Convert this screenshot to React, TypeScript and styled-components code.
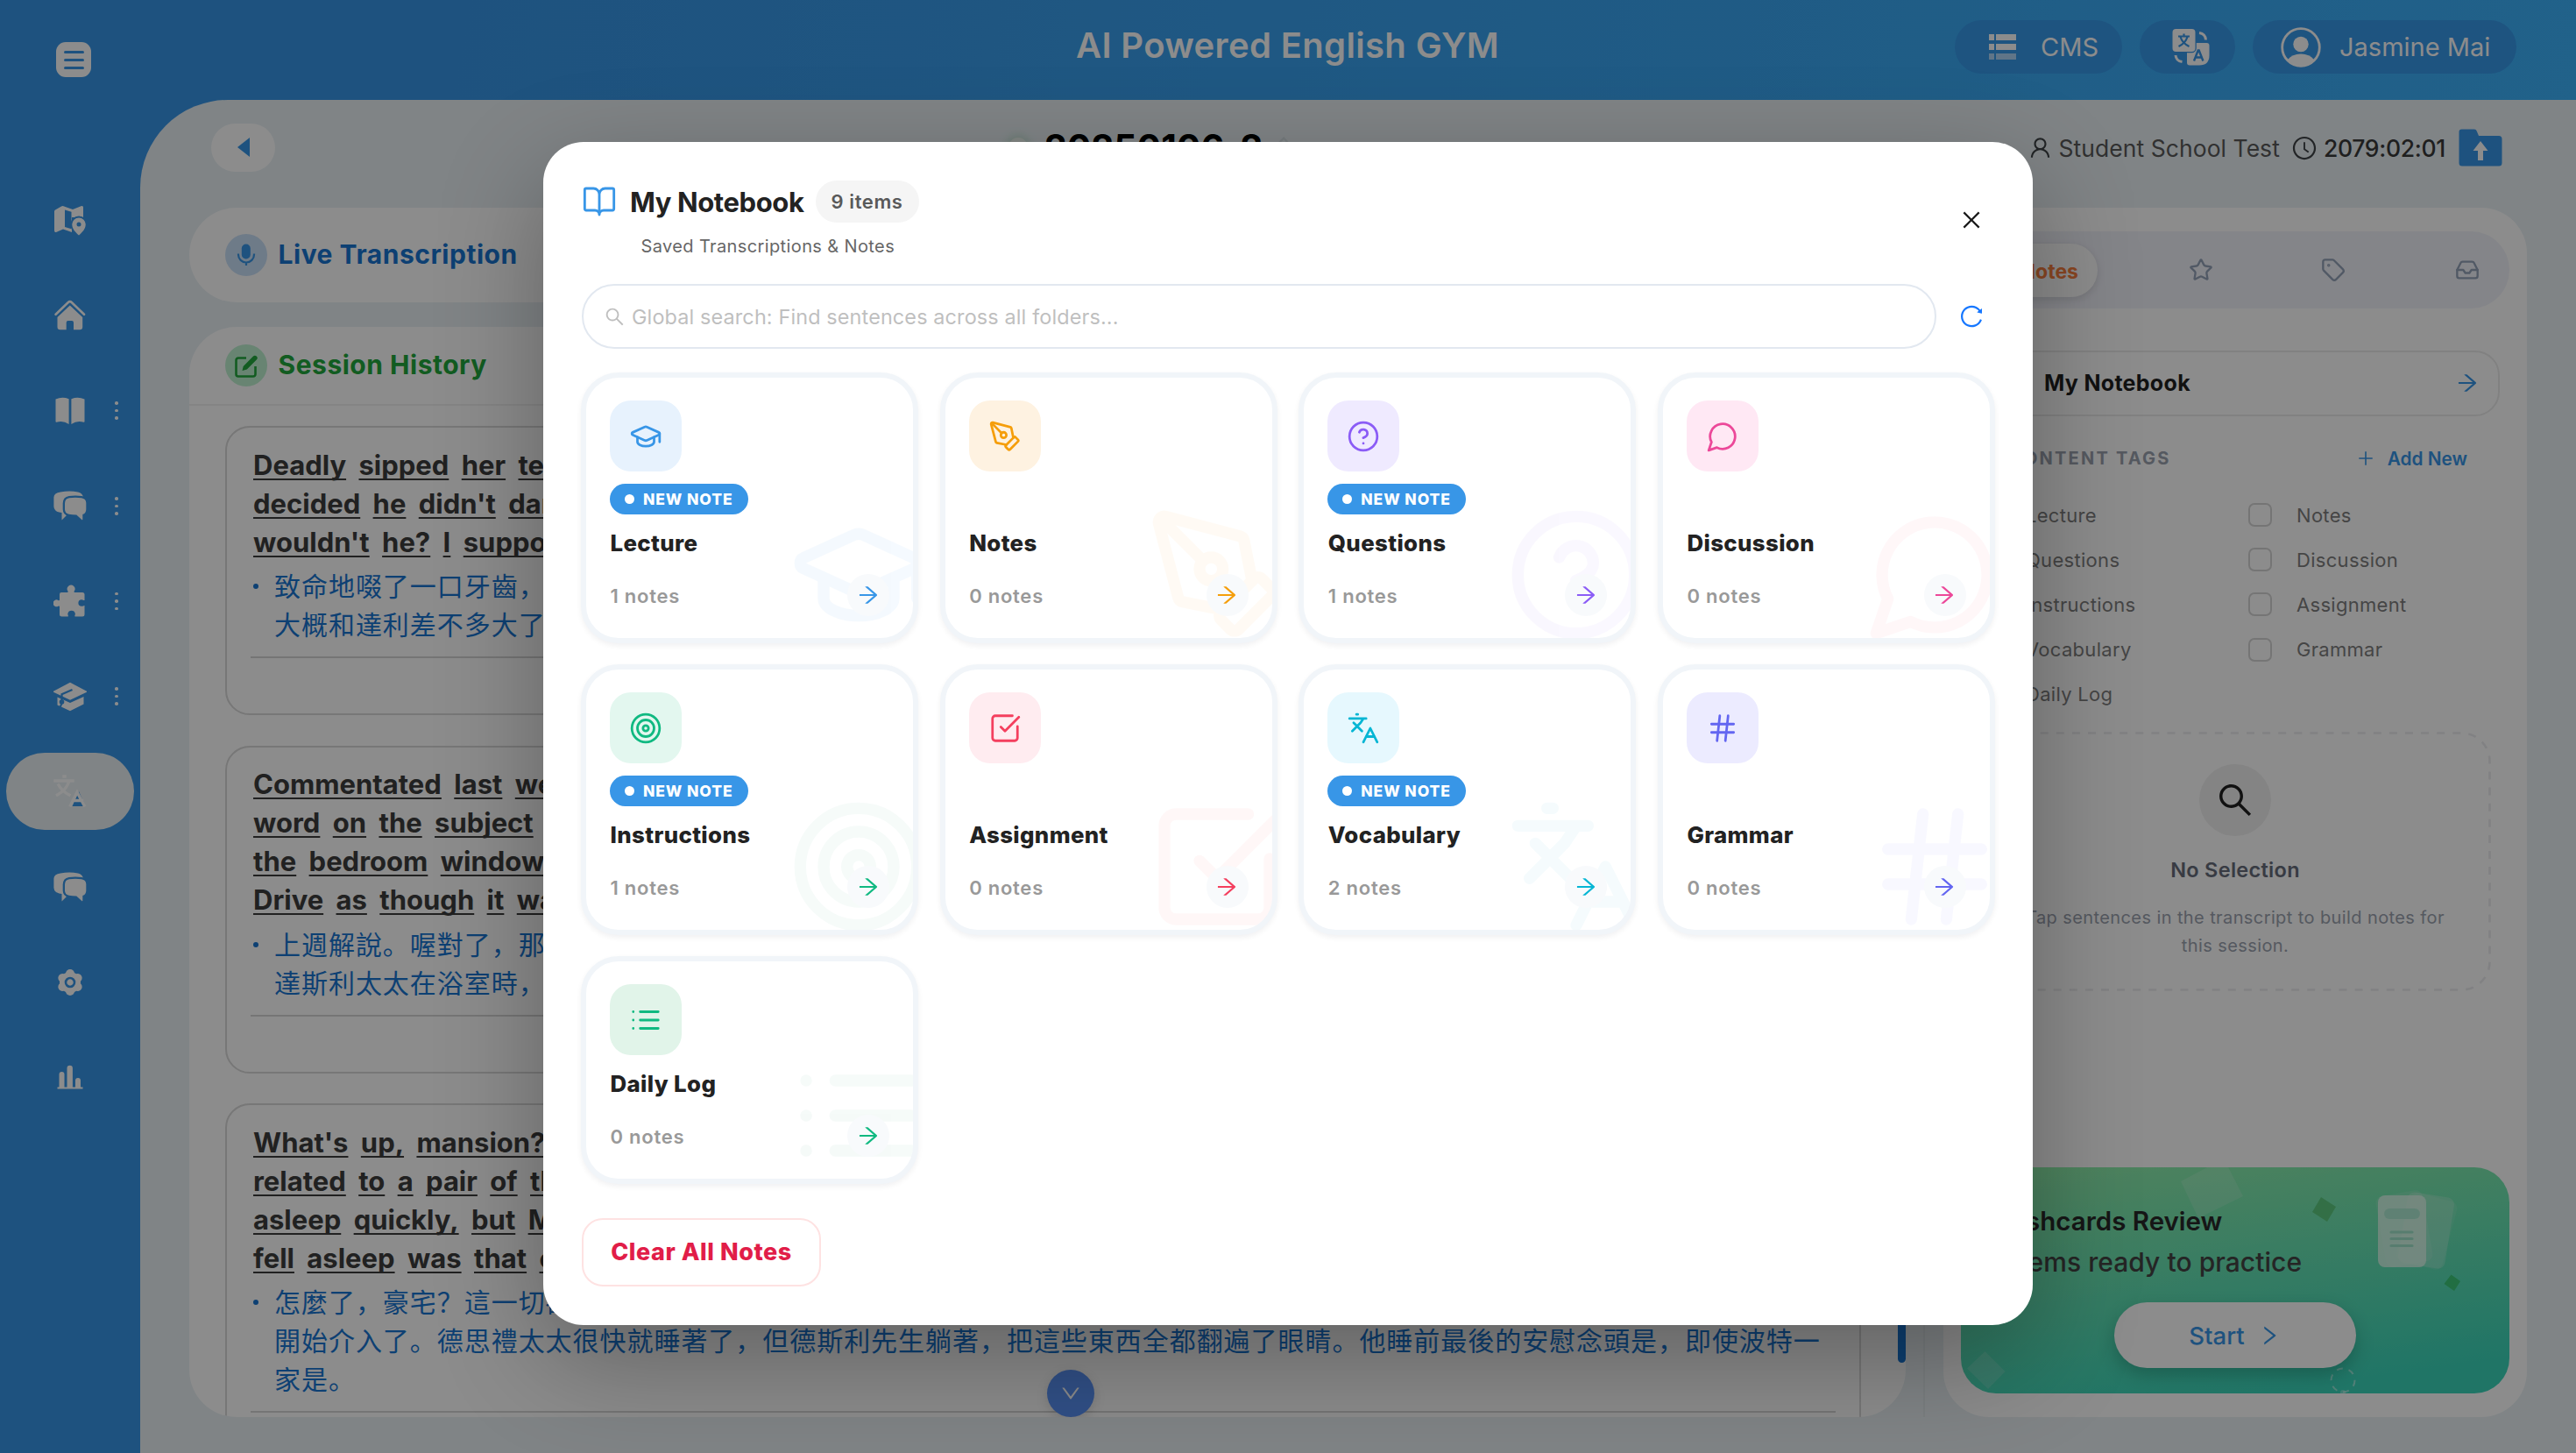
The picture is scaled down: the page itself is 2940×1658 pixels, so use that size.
import React from 'react';
import styled, { createGlobalStyle } from 'styled-components';
import { Inbox, Star, Tag as TagIcon } from 'lucide-react';
import {
  AiOutlineArrowRight,
  AiOutlineClockCircle,
  AiOutlineClose,
  AiOutlineDown,
  AiOutlineEdit,
  AiOutlinePlus,
  AiOutlineReload,
  AiOutlineRight,
  AiOutlineSearch,
  AiOutlineUser,
} from 'react-icons/ai';

const BLUE = '#3896e7';
const PAGE = '#e9f1f5';
const LINK = '#1976d2';
const SANS = '"Inter", "Noto Sans CJK SC", "Liberation Sans", sans-serif';

const GlobalStyle = createGlobalStyle`
  * { box-sizing: border-box; }
  html, body { margin: 0; padding: 0; }
  body { width: 2940px; height: 1658px; overflow: hidden; font-family: ${SANS}; }
  button { font-family: inherit; border: 0; background: none; padding: 0; }
  svg { display: block; flex: none; }
`;

/* ---------- shell ---------- */

const Shell = styled.div`
  position: relative;
  width: 2940px;
  height: 1658px;
  overflow: hidden;
  display: flex;
  flex-direction: column;
  background: ${BLUE};
`;

const Header = styled.header`
  height: 114px;
  flex: none;
  display: grid;
  grid-template-columns: 1fr auto 1fr;
  align-items: start;
  padding: 0 68px 0 64px;
  background: linear-gradient(100deg, ${BLUE} 0%, ${BLUE} 18%, #3cb2fb 100%);
`;

const MenuButton = styled.button`
  width: 40px;
  height: 40px;
  margin-top: 48px;
  border-radius: 11px;
  background: #fff;
  display: flex;
  flex-direction: column;
  align-items: center;
  justify-content: center;
  gap: 6px;
`;

const MenuLine = styled.span`
  width: 23px;
  height: 3px;
  border-radius: 2px;
  background: ${BLUE};
`;

const AppTitle = styled.h1`
  margin: 28px 0 0;
  padding-left: 3px;
  font-size: 40px;
  line-height: 48px;
  font-weight: 600;
  letter-spacing: 0.35px;
  color: #fff;
  white-space: nowrap;
`;

const HeaderActions = styled.div`
  display: flex;
  justify-content: flex-end;
  gap: 20px;
  margin-top: 23px;
`;

const Chip = styled.button<{ $w: number; $gap?: number; $start: number }>`
  width: ${(p) => p.$w}px;
  height: 61px;
  border-radius: 31px;
  background: #3899ea;
  display: flex;
  align-items: center;
  padding-left: ${(p) => p.$start}px;
  gap: ${(p) => p.$gap ?? 0}px;
  color: #fff;
  font-size: 29px;
  letter-spacing: 0;
  white-space: nowrap;
`;

const Body = styled.div`
  flex: 1;
  min-height: 0;
  display: flex;
`;

const Sidebar = styled.nav`
  width: 160px;
  flex: none;
  padding-top: 83px;
  display: flex;
  flex-direction: column;
`;

const NavRow = styled.div`
  height: 108.67px;
  display: grid;
  grid-template-columns: 1fr 40px 1fr;
  align-items: center;
  justify-items: center;
  color: #fff;
`;

const NavIcon = styled.span`
  grid-column: 2;
  display: flex;
  justify-content: center;
`;

const NavDots = styled.span`
  grid-column: 3;
  display: flex;
  flex-direction: column;
  gap: 5px;
  margin-left: 6px;
`;

const NavDot = styled.i`
  width: 3.5px;
  height: 3.5px;
  border-radius: 50%;
  background: #fff;
`;

const ActivePill = styled.div`
  width: 146px;
  height: 88px;
  margin: 10.33px auto;
  border-radius: 44px;
  background: ${PAGE};
  display: flex;
  align-items: center;
  justify-content: center;
`;

const Content = styled.main`
  flex: 1;
  min-width: 0;
  border-top-left-radius: 100px;
  background: ${PAGE};
  display: flex;
  flex-direction: column;
  padding: 0 56px 41px;
`;

/* ---------- title row ---------- */

const TitleRow = styled.div`
  height: 122.5px;
  flex: none;
  display: grid;
  grid-template-columns: 910px 1fr auto;
  align-items: center;
  padding: 27px 28px 41px 25px;
`;

const BackButton = styled.button`
  width: 73px;
  height: 54.5px;
  border-radius: 28px;
  background: #fff;
  display: flex;
  align-items: center;
  justify-content: center;
`;

const SessionTitle = styled.div`
  display: flex;
  align-items: center;
  color: #000;
  font-size: 41px;
  line-height: 50px;
  font-weight: 700;
`;

const LiveDot = styled.span`
  width: 22px;
  height: 22px;
  margin-right: 19px;
  border-radius: 50%;
  background: #eef6f0;
  box-shadow: 0 0 10px 3px rgba(120, 200, 140, 0.28);
`;

const EditMark = styled.span`
  margin-left: 4px;
  color: #d8e0e4;
`;

const SessionInfo = styled.div`
  display: flex;
  align-items: center;
  padding-top: 1px;
  color: #595959;
  white-space: nowrap;
`;

const InfoText = styled.span<{ $strong?: boolean }>`
  margin: 0 ${(p) => (p.$strong ? 15 : 13)}px 0 7px;
  font-size: ${(p) => (p.$strong ? 26.5 : 26.5)}px;
  font-weight: ${(p) => (p.$strong ? 500 : 400)};
  letter-spacing: ${(p) => (p.$strong ? -0.3 : 0.05)}px;
  color: ${(p) => (p.$strong ? '#3a3a3a' : '#595959')};
`;

const InfoIcon = styled.span`
  color: #3f4346;
`;

/* ---------- columns ---------- */

const Columns = styled.div`
  flex: 1;
  min-height: 0;
  display: flex;
`;

const LeftColumn = styled.section`
  width: 1959px;
  flex: none;
  display: flex;
  flex-direction: column;
  gap: 28px;
`;

const ColumnRule = styled.div`
  width: 2px;
  margin: 0 21px 0 20px;
  background: rgba(0, 0, 0, 0.035);
`;

const LiveCard = styled.div`
  height: 108.5px;
  flex: none;
  border-radius: 54px;
  background: #fff;
  display: flex;
  align-items: center;
  gap: 12.5px;
  padding-left: 41px;
`;

const HistoryCard = styled.div`
  position: relative;
  flex: 1;
  min-height: 0;
  overflow: hidden;
  border-radius: 54px;
  background: #fff;
  display: flex;
  flex-direction: column;
`;

const HistoryHead = styled.div`
  height: 90px;
  flex: none;
  border-bottom: 2px solid #f0f0f0;
  display: flex;
  align-items: center;
  gap: 12.5px;
  padding-left: 41px;
`;

const RoundIcon = styled.span<{ $bg: string; $fg: string }>`
  width: 48px;
  height: 48px;
  border-radius: 50%;
  background: ${(p) => p.$bg};
  color: ${(p) => p.$fg};
  display: flex;
  align-items: center;
  justify-content: center;
`;

const SectionTitle = styled.h2<{ $c: string }>`
  margin: 0;
  padding-bottom: 2px;
  font-size: 30px;
  font-weight: 700;
  letter-spacing: 0.52px;
  color: ${(p) => p.$c};
`;

const HistoryList = styled.div`
  display: flex;
  flex-direction: column;
  gap: 34.7px;
  padding: 23px 51px 0 41px;
`;

const Entry = styled.article`
  border: 2px solid #d9d9d9;
  border-radius: 28px;
  padding: 20px 27px 63px;
  flex: none;
`;

const WordLine = styled.div`
  height: 44px;
  display: flex;
  align-items: center;
  gap: 14.4px;
  padding-left: 3px;
  font-size: 31px;
  font-weight: 700;
  color: #3d3d3d;
  white-space: nowrap;
`;

const Word = styled.span`
  text-decoration: underline;
  text-decoration-thickness: 2px;
  text-underline-offset: 4px;
  text-decoration-skip-ink: none;
`;

const Translation = styled.div`
  margin-top: 6px;
  padding-bottom: 15px;
  border-bottom: 2px solid #d6d6d6;
  display: grid;
  grid-template-columns: 27px 1fr;
  color: ${LINK};
`;

const Bullet = styled.i`
  width: 6px;
  height: 6px;
  margin: 20px 0 0 3px;
  border-radius: 50%;
  background: ${LINK};
`;

const ZhLine = styled.div`
  height: 44px;
  line-height: 43px;
  font-family: "Noto Sans CJK SC", sans-serif;
  font-size: 30px;
  letter-spacing: 0.96px;
  white-space: nowrap;
`;

const ScrollThumb = styled.div`
  position: absolute;
  right: 0;
  top: 560px;
  width: 9px;
  height: 622px;
  border-radius: 5px;
  background: ${LINK};
`;

const DownButton = styled.button`
  position: absolute;
  left: 979px;
  bottom: 0;
  width: 54px;
  height: 54px;
  border-radius: 50%;
  background: #5a92f6;
  color: #fff;
  display: flex;
  align-items: center;
  justify-content: center;
  box-shadow: 0 4px 14px rgba(0, 0, 0, 0.14);
`;

/* ---------- right panel ---------- */

const Panel = styled.aside`
  width: 666px;
  flex: none;
  border-radius: 52px;
  background: #fff;
  display: flex;
  flex-direction: column;
  padding: 27.5px 20px 27px;
`;

const Tabs = styled.div`
  height: 88px;
  flex: none;
  border-radius: 44px;
  background: #f1f2fa;
  display: grid;
  grid-template-columns: 142px 1fr 1fr 1fr;
  align-items: center;
  padding: 0 0 0 14px;
  color: #94a3b8;
`;

const ActiveTab = styled.div`
  height: 61px;
  border-radius: 31px;
  background: #fff;
  box-shadow: 0 3px 10px rgba(0, 0, 0, 0.12);
  display: flex;
  align-items: center;
  justify-content: flex-end;
  padding: 3px 22px 0 0;
  color: #f9803e;
  font-size: 23px;
  font-weight: 700;
`;

const TabIcon = styled.span<{ $x: number }>`
  padding-left: ${(p) => p.$x}px;
`;

const NotebookRow = styled.div`
  height: 75px;
  flex: none;
  margin: 48px 11px 0;
  border: 2px solid #ececec;
  border-radius: 28px;
  display: flex;
  align-items: center;
  justify-content: space-between;
  padding: 0 21px 1px 82px;
  font-size: 25px;
  font-weight: 700;
  letter-spacing: 0.3px;
  color: #1f1f1f;
`;

const TagsHead = styled.div`
  display: flex;
  justify-content: space-between;
  align-items: center;
  height: 40px;
  margin-top: 28px;
  padding: 0 48px 0 55px;
  font-size: 20px;
  font-weight: 700;
  color: #9ca3af;
  letter-spacing: 2.2px;
`;

const AddNew = styled.span`
  display: flex;
  align-items: center;
  gap: 14px;
  color: ${BLUE};
  font-size: 20.8px;
  font-weight: 600;
  letter-spacing: 0;
`;

const TagGrid = styled.div`
  display: grid;
  grid-template-columns: 309px 1fr;
  grid-auto-rows: 51.2px;
  align-items: center;
  margin-top: 19px;
  padding-left: 19px;
`;

const TagOption = styled.label`
  display: flex;
  align-items: center;
  gap: 28px;
  font-size: 22px;
  letter-spacing: 0.3px;
  color: #7f7f7f;
`;

const CheckBox = styled.span`
  width: 27px;
  height: 27px;
  border: 2px solid #d6d6d6;
  border-radius: 7px;
`;

const EmptyBox = styled.div`
  position: relative;
  width: 584px;
  height: 296px;
  flex: none;
  margin: 17px auto 0;
  display: flex;
  flex-direction: column;
  align-items: center;
`;

const DashFrame = styled.svg`
  position: absolute;
  inset: 0;
`;

const EmptyIcon = styled.span`
  width: 82px;
  height: 82px;
  margin-top: 37px;
  border-radius: 50%;
  background: #f1f1f1;
  color: #1f1f1f;
  display: flex;
  align-items: center;
  justify-content: center;
`;

const EmptyTitle = styled.div`
  margin-top: 22.5px;
  line-height: 34px;
  font-size: 23.5px;
  font-weight: 600;
  letter-spacing: 0.3px;
  color: #666c7a;
`;

const EmptyText = styled.p`
  margin: 21px 0 0;
  line-height: 32px;
  font-size: 20px;
  letter-spacing: 0.4px;
  text-align: center;
  color: #9ca3af;
  white-space: pre-line;
`;

const Flash = styled.div`
  position: relative;
  height: 258px;
  flex: none;
  margin-top: auto;
  border-radius: 40px;
  overflow: hidden;
  background: linear-gradient(172deg, #8eeeac 5%, #3bd6bb 88%);
  display: flex;
  flex-direction: column;
`;

const FlashArt = styled.svg`
  position: absolute;
  inset: 0;
`;

const FlashTitle = styled.div`
  position: relative;
  margin: 40px 0 0 32px;
  line-height: 42px;
  font-size: 29.5px;
  font-weight: 600;
  color: #282828;
`;

const FlashText = styled.div`
  position: relative;
  margin: 5px 0 0 32px;
  line-height: 42px;
  font-size: 30px;
  font-weight: 500;
  letter-spacing: 0.05px;
  color: #444;
`;

const StartButton = styled.button`
  position: relative;
  width: 276px;
  height: 75px;
  margin: 25px auto 0;
  border-radius: 38px;
  background: #fff;
  color: ${BLUE};
  box-shadow: 0 8px 20px rgba(0, 60, 50, 0.28);
  display: flex;
  align-items: center;
  justify-content: center;
  gap: 14px;
  font-size: 27.5px;
  font-weight: 500;
`;

/* ---------- modal ---------- */

const Overlay = styled.div`
  position: absolute;
  inset: 0;
  background: rgba(0, 0, 0, 0.45);
  display: flex;
  justify-content: center;
  align-items: flex-start;
  padding-top: 162px;
`;

const Dialog = styled.div`
  width: 1700px;
  height: 1350px;
  border-radius: 46px;
  background: #fff;
  box-shadow: 0 40px 120px rgba(0, 0, 0, 0.3);
  padding: 44px;
  display: flex;
  flex-direction: column;
`;

const DialogHead = styled.div`
  display: flex;
  align-items: center;
  justify-content: space-between;
  height: 90px;
`;

const DialogTitleRow = styled.div`
  display: flex;
  align-items: center;
  height: 48px;
  color: ${BLUE};
`;

const DialogTitle = styled.h3`
  margin: 0 13px 0 15px;
  font-size: 31px;
  font-weight: 700;
  letter-spacing: -0.4px;
  color: #222;
`;

const CountPill = styled.span`
  height: 48px;
  padding: 0 18px;
  border-radius: 24px;
  background: #f5f5f5;
  color: #595959;
  display: flex;
  align-items: center;
  font-size: 22px;
  font-weight: 600;
  letter-spacing: 0.6px;
`;

const DialogSub = styled.div`
  margin: 12px 0 0 67.5px;
  line-height: 30px;
  font-size: 20px;
  letter-spacing: 0.38px;
  color: #666;
`;

const SquareButton = styled.button<{ $c: string }>`
  width: 52px;
  height: 52px;
  display: flex;
  align-items: center;
  justify-content: center;
  color: ${(p) => p.$c};
`;

const SearchRow = styled.div`
  margin-top: 28px;
  display: flex;
  align-items: center;
  gap: 14px;
`;

const SearchField = styled.div`
  flex: 1;
  height: 74px;
  border: 2px solid #e2e8f0;
  border-radius: 37px;
  padding-left: 23px;
  display: flex;
  align-items: center;
  gap: 7px;
  font-size: 23.4px;
  letter-spacing: 0.14px;
  color: #bfbfbf;
`;

const FolderGrid = styled.div`
  margin: 27px -1px 0;
  display: grid;
  grid-template-columns: repeat(4, 385px);
  gap: 24.67px;
`;

const Folder = styled.article`
  position: relative;
  overflow: hidden;
  border: 6px solid #f1f5f9;
  border-radius: 43px;
  background: #fff;
  box-shadow: 0 3px 6px rgba(15, 23, 42, 0.06);
  padding: 26px 27px 25px;
  display: flex;
  flex-direction: column;
  align-items: flex-start;
`;

const Watermark = styled.span<{ $c: string }>`
  position: absolute;
  right: -17.5px;
  bottom: -8px;
  opacity: 0.045;
  color: ${(p) => p.$c};
`;

const Tile = styled.span<{ $bg: string; $fg: string }>`
  width: 82px;
  height: 81px;
  flex: none;
  border-radius: 24px;
  background: ${(p) => p.$bg};
  color: ${(p) => p.$fg};
  display: flex;
  align-items: center;
  justify-content: center;
`;

const NewBadge = styled.span`
  height: 35px;
  margin-top: 14px;
  padding: 0 17px;
  border-radius: 18px;
  background: ${BLUE};
  color: #fff;
  display: flex;
  align-items: center;
  gap: 10px;
  font-size: 17.5px;
  font-weight: 800;
  letter-spacing: 0.9px;
`;

const BadgeDot = styled.i`
  width: 11px;
  height: 11px;
  border-radius: 50%;
  background: #fff;
`;

const FolderName = styled.div`
  margin-top: auto;
  padding: 14.5px 0 0 0.5px;
  line-height: 36px;
  font-size: 25.8px;
  font-weight: 800;
  letter-spacing: 0.38px;
  color: #222;
`;

const FolderFoot = styled.div`
  position: relative;
  width: 100%;
  margin-top: 17px;
  display: flex;
  align-items: center;
  justify-content: space-between;
  font-size: 22px;
  font-weight: 600;
  letter-spacing: 0.75px;
  color: #999;
`;

const FolderCount = styled.span`
  padding: 3px 0 0 0.5px;
`;

const GoCircle = styled.span<{ $c: string }>`
  width: 48px;
  height: 48px;
  border-radius: 50%;
  background: #f8fafc;
  color: ${(p) => p.$c};
  display: flex;
  align-items: center;
  justify-content: center;
  padding: 0 1px 0 0;
`;

const ClearButton = styled.button`
  align-self: flex-start;
  width: 273px;
  height: 78px;
  margin-top: 39px;
  border: 2px solid #fee2e2;
  border-radius: 24px;
  color: #e11d48;
  font-size: 27px;
  font-weight: 800;
  letter-spacing: 0.55px;
`;

/* ---------- icon drawings ---------- */

const MapGlyph = () => (
  <svg width="36" height="36" viewBox="2 0 36 36">
    <path d="M2 8.5q0-1.6 1.5-2.2L10 2.4q1.2-.6 2.4-.2L23 6l9.400-3.800q2.600-1 2.600 1.300V15H22v17L12 28.600l-7.400 3.200Q2 32.800 2 30z" fill="#fff" />
    <path d="M14 6.500l7.500 2.200v19.600l-7.500-2.300z" fill={BLUE} />
    <path d="M30 35.500c-4-3.600-7.700-7.400-7.700-12.300a7.700 7.700 0 0 1 15.400 0c0 4.900-3.700 8.700-7.700 12.300z" fill="#fff" stroke={BLUE} strokeWidth="4" paintOrder="stroke" />
    <circle cx="30" cy="23" r="2.500" fill={BLUE} />
  </svg>
);

const HomeGlyph = () => (
  <svg width="36" height="35" viewBox="0 0 36 35">
    <path d="M1.800 16.800L15.800 3.200q2.200-2 4.400 0l14 13.600" transform="translate(-.2 0)" fill="none" stroke="#fff" strokeWidth="2.600" strokeLinecap="round" />
    <path d="M17.800 6.500L32.200 20v11a3.200 3.200 0 0 1-3.200 3.200h-7V26a2 2 0 0 0-2-2h-4.300a2 2 0 0 0-2 2v8.200h-7A3.200 3.200 0 0 1 3.500 31V20z" fill="#fff" />
  </svg>
);

const BookPagesGlyph = () => (
  <svg width="34" height="32" viewBox="0 0 34 32">
    <path d="M.5 2.500Q8-.8 15.600 2.200V31Q9 26.500 1.500 28.800q-1 .2-1-.8zM33.500 2.500Q26-.8 18.400 2.200V31q6.600-4.500 14.100-2.200 1 .2 1-.8z" fill="#fff" />
  </svg>
);

const ChatGlyph = () => (
  <svg width="38" height="34" viewBox="0 0 38 34">
    <path d="M8 1.500Q18-.6 28 1.400q5 .9 6 6V17q0 6-5 6.600L18 25l-8.500 8.500V25l-3-.6Q.8 23.500.4 18V7.500Q.6 2.500 8 1.500z" fill="#fff" />
    <path d="M18 8.300q7-.9 14 0 5.200.8 5.300 5.500v7.500q-.1 4.800-4 5.600v5.600q0 1-1 .4l-6-5.400q-5-.1-8.500-.7-4.700-.8-4.800-5.500v-7q.2-5.300 5-6z" fill="#fff" stroke={BLUE} strokeWidth="4.600" paintOrder="stroke" />
  </svg>
);

const PuzzleGlyph = () => (
  <svg width="38" height="38" viewBox="0 0 38 38">
    <path
      d="M9 9h6.800c.8 0 1-.7.700-1.400a4.400 4.400 0 1 1 7.200 0c-.4.7-.1 1.400.7 1.400H33a2.500 2.500 0 0 1 2.500 2.500V18c-1 .4-1.600-.8-3.300-.8a3.800 3.800 0 0 0 0 7.600c1.700 0 2.300-1.200 3.300-.8v10a2.500 2.500 0 0 1-2.500 2.500h-8.500c-.6-1.100.6-1.800.3-3.400a4.300 4.300 0 0 0-8.400 0c-.3 1.600.9 2.300.3 3.400H9.500A2.500 2.500 0 0 1 7 34v-8.800c0-.8-.9-1-1.600-.5a3.900 3.900 0 1 1 0-6.800c.7.5 1.600.2 1.600-.5V11a2 2 0 0 1 2-2z"
      fill="#fff"
    />
  </svg>
);

const CapGlyph = () => (
  <svg width="38" height="34" viewBox="0 0 38 34">
    <path d="M19 .8L38 10.800v1L19 20.800 0 11.800v-1z" fill="#fff" />
    <path d="M4.500 17.500L19 24l15.500-7v8.500L19 33.300 4.500 26.500z" fill="#fff" />
    <path d="M21.500 9L9.500 14.300V21" fill="none" stroke={BLUE} strokeWidth="2.200" />
    <circle cx="9.500" cy="23" r="2.800" fill={BLUE} />
    <path d="M9.500 24.500l-2.500 6" stroke={BLUE} strokeWidth="2" />
  </svg>
);

const GearGlyph = () => (
  <svg width="34" height="34" viewBox="-17 -17 34 34">
    <circle r="12" fill="#fff" />
    {[0, 60, 120, 180, 240, 300].map((a) => (
      <circle key={a} r="5" cx="0" cy="-10" transform={`rotate(${a})`} fill="#fff" />
    ))}
    <circle r="5" fill="none" stroke={BLUE} strokeWidth="2.600" />
  </svg>
);

const ChartGlyph = () => (
  <svg width="30" height="28" viewBox="0 0 30 28">
    <path d="M2.500 26V11a3 3 0 0 1 6 0v15zM11.500 26V4a3.200 3.200 0 0 1 6.400 0v22zM21 26v-8a3 3 0 0 1 6 0v8z" fill="#fff" />
    <path d="M.5 26.500h29" stroke="#fff" strokeWidth="2" />
  </svg>
);

const ActiveTranslateGlyph = () => (
  <svg width="38" height="40" viewBox="0 0 38 40" fill="none" stroke="#fff" strokeWidth="3.400" strokeLinecap="square">
    <path d="M29 20l-7.500 17h15z" fill={BLUE} stroke="none" />
    <path d="M2 8h20M12 3h1M17.500 9.500Q14 19 4.500 24M6 13q4 7 12 11" />
    <path d="M19.500 36l7.500-15 8 15M22.500 30.500h10" />
  </svg>
);

const HeaderTranslateGlyph = () => (
  <svg width="44" height="44" viewBox="0 0 44 44">
    <path d="M21 17h18.500a3 3 0 0 1 3 3v11q0 11.500-11.500 11.500H20a3 3 0 0 1-3-3V17z" fill="#fff" />
    <rect x="0.500" y="1" width="26" height="26" rx="4" fill="#fff" stroke={BLUE} strokeWidth="2.500" paintOrder="stroke" />
    <path d="M7 9.500h13M13.500 6.500v3M17.500 10Q15.500 17 7.500 21M9.500 10q2 7 10 11" fill="none" stroke={BLUE} strokeWidth="2.200" />
    <path d="M25 37.500l4.700-12h1l4.700 12M26.700 33.500h7" fill="none" stroke={BLUE} strokeWidth="2.400" />
    <path d="M31 5.500q7 1 7.500 8M4 31q.5 6.500 7.500 7.500" fill="none" stroke="#fff" strokeWidth="3" />
  </svg>
);

const ListGlyph = () => (
  <svg width="31" height="30" viewBox="0 0 31 30" fill="#fff">
    <path d="M0 0h6v7H0zM8 0h23v7H8zM0 11h6v7H0zM8 11h23v7H8z" />
    <path d="M0 22h6v7H0zM8 22h23v7H8z" opacity="0.600" />
  </svg>
);

const ProfileGlyph = () => (
  <svg width="46" height="46" viewBox="0 0 46 46">
    <circle cx="23" cy="23" r="21.300" fill="none" stroke="#fff" strokeWidth="2.800" />
    <circle cx="23" cy="19.500" r="8.700" fill="#fff" />
    <path d="M8 37q5-6.500 15-6.500T38 37q-6 7-15 7T8 37z" fill="#fff" />
  </svg>
);

const FolderUpGlyph = () => (
  <svg width="50" height="43" viewBox="0 0 50 43">
    <path d="M3.500.5H18q2 0 2.700 2L23 8h23q3.500 0 3.500 3.500V39q0 3.500-3.500 3.500H4Q.5 42.500.5 39V3.500q0-3 3-3z" fill={BLUE} />
    <path d="M25 14l8.500 11h-5.500v11h-6V25h-5.500z" fill="#fff" />
  </svg>
);

const MicGlyph = () => (
  <svg width="22" height="26" viewBox="0 0 22 26">
    <rect x="5.800" y="0.500" width="10" height="17" rx="5" fill={BLUE} />
    <path d="M2 11.500v1a9 9 0 0 0 18 0v-1M11 21.500V25" fill="none" stroke={BLUE} strokeWidth="2.200" />
  </svg>
);

const EditGlyph = () => (
  <svg width="27" height="27" viewBox="0 0 27 27">
    <path d="M13 4.500H4a2.500 2.500 0 0 0-2.500 2.500v16A2.500 2.500 0 0 0 4 25.500h17a2.500 2.500 0 0 0 2.500-2.500v-9" fill="none" stroke="#21a83c" strokeWidth="2.600" />
    <path d="M8.500 19l1.200-5L20.500 3q2.300-2.300 4.300-.4t0 4L13.800 17.500z" fill="#21a83c" />
  </svg>
);

type IconName = 'cap' | 'pen' | 'help' | 'chat' | 'target' | 'check' | 'lang' | 'hash' | 'list';

const STROKES: Record<IconName, React.ReactNode> = {
  cap: (
    <>
      <path d="M21.420 10.922a1 1 0 0 0-.019-1.838L12.830 5.180a2 2 0 0 0-1.660 0L2.600 9.080a1 1 0 0 0 0 1.832l8.570 3.908a2 2 0 0 0 1.660 0z" />
      <path d="M22 10v6M6 12.500V16a6 3 0 0 0 12 0v-3.500" />
    </>
  ),
  pen: (
    <>
      <path d="M15.707 21.293a1 1 0 0 1-1.414 0l-1.586-1.586a1 1 0 0 1 0-1.414l5.586-5.586a1 1 0 0 1 1.414 0l1.586 1.586a1 1 0 0 1 0 1.414z" />
      <path d="m18 13-1.375-6.874a1 1 0 0 0-.746-.776L3.235 2.028a1 1 0 0 0-1.207 1.207L5.350 15.879a1 1 0 0 0 .776.746L13 18" />
      <path d="m2.300 2.300 7.286 7.286" />
      <circle cx="11" cy="11" r="2" />
    </>
  ),
  help: (
    <>
      <circle cx="12" cy="12" r="10" />
      <path d="M9.090 9a3 3 0 0 1 5.830 1c0 2-3 3-3 3M12 17h.01" />
    </>
  ),
  chat: <path d="M7.900 20A9 9 0 1 0 4 16.100L2 22Z" />,
  target: (
    <>
      <circle cx="12" cy="12" r="10" />
      <circle cx="12" cy="12" r="6" />
      <circle cx="12" cy="12" r="2" />
    </>
  ),
  check: (
    <>
      <path d="M21 10.656V19a2 2 0 0 1-2 2H5a2 2 0 0 1-2-2V5a2 2 0 0 1 2-2h12.344" />
      <path d="m9 11 3 3L22 4" />
    </>
  ),
  lang: <path d="m5 8 6 6M4 14l6-6 2-3M2 5h12M7 2h1M22 22l-5-10-5 10M14 18h6" />,
  hash: <path d="M4 9h16M4 15h16M10 3 8 21M16 3l-2 18" />,
  list: <path d="M8 6h13M8 12h13M8 18h13M3 6h.01M3 12h.01M3 18h.01" />,
};

const LineIcon = ({ name, size, weight }: { name: IconName; size: number; weight: number }) => (
  <svg
    width={size}
    height={size}
    viewBox="0 0 24 24"
    fill="none"
    stroke="currentColor"
    strokeWidth={weight}
    strokeLinecap="round"
    strokeLinejoin="round"
  >
    {STROKES[name]}
  </svg>
);

const BookGlyph = () => (
  <svg width="40" height="40" viewBox="0 0 24 24" fill="none" stroke="currentColor" strokeWidth="1.700" strokeLinecap="round" strokeLinejoin="round">
    <path d="M12 7v14M3 18a1 1 0 0 1-1-1V4a1 1 0 0 1 1-1h5a4 4 0 0 1 4 4 4 4 0 0 1 4-4h5a1 1 0 0 1 1 1v13a1 1 0 0 1-1 1h-6a3 3 0 0 0-3 3 3 3 0 0 0-3-3z" />
  </svg>
);

/* ---------- data ---------- */

interface FolderItem {
  name: string;
  count: number;
  icon: IconName;
  color: string;
  tile: string;
  mark?: string;
  fresh?: boolean;
}

const FOLDERS: FolderItem[] = [
  { name: 'Lecture', count: 1, icon: 'cap', color: '#3896e7', tile: '#e7f2fd', mark: '#1f8cf5', fresh: true },
  { name: 'Notes', count: 0, icon: 'pen', color: '#f59e0b', tile: '#fef2e1', mark: '#f5900f' },
  { name: 'Questions', count: 1, icon: 'help', color: '#8b5cf6', tile: '#efeaff', fresh: true },
  { name: 'Discussion', count: 0, icon: 'chat', color: '#ec4899', tile: '#ffe8f4', mark: '#f0486a' },
  { name: 'Instructions', count: 1, icon: 'target', color: '#10b981', tile: '#e3f7ef', mark: '#2f9673', fresh: true },
  { name: 'Assignment', count: 0, icon: 'check', color: '#f43f5e', tile: '#ffecf0', mark: '#ff4a4a' },
  { name: 'Vocabulary', count: 2, icon: 'lang', color: '#06b6d4', tile: '#e6f8fe', mark: '#1fa5c4', fresh: true },
  { name: 'Grammar', count: 0, icon: 'hash', color: '#6366f1', tile: '#ecebff' },
  { name: 'Daily Log', count: 0, icon: 'list', color: '#10b981', tile: '#e1f4e9', mark: '#2f9673' },
];

const ENTRIES = [
  {
    words: ['Deadly sipped her tea', "decided he didn't dare", "wouldn't he? I suppose"],
    zh: ['致命地啜了一口牙齒，', '大概和達利差不多大了'],
  },
  {
    words: ['Commentated last week', 'word on the subject as', 'the bedroom window and', 'Drive as though it was'],
    zh: ['上週解說。喔對了，那', '達斯利太太在浴室時，'],
  },
  {
    words: ["What's up, mansion? all", 'related to a pair of the', 'asleep quickly, but Mr', 'fell asleep was that even'],
    zh: [
      '怎麼了，豪宅？這一切都',
      '開始介入了。德思禮太太很快就睡著了，但德斯利先生躺著，把這些東西全都翻遍了眼睛。他睡前最後的安慰念頭是，即使波特一',
      '家是。',
    ],
  },
];

const NAV: { icon: React.ReactNode; more?: boolean; active?: boolean }[] = [
  { icon: <MapGlyph /> },
  { icon: <HomeGlyph /> },
  { icon: <BookPagesGlyph />, more: true },
  { icon: <ChatGlyph />, more: true },
  { icon: <PuzzleGlyph />, more: true },
  { icon: <CapGlyph />, more: true },
  { icon: <ActiveTranslateGlyph />, active: true },
  { icon: <ChatGlyph /> },
  { icon: <GearGlyph /> },
  { icon: <ChartGlyph /> },
];

const TAGS = ['Lecture', 'Notes', 'Questions', 'Discussion', 'Instructions', 'Assignment', 'Vocabulary', 'Grammar', 'Daily Log'];

/* ---------- sections ---------- */

const TopBar = () => (
  <Header>
    <MenuButton>
      <MenuLine />
      <MenuLine />
      <MenuLine />
    </MenuButton>
    <AppTitle>AI Powered English GYM</AppTitle>
    <HeaderActions>
      <Chip $w={191} $start={39} $gap={28}>
        <ListGlyph />
        CMS
      </Chip>
      <Chip $w={109} $start={37}>
        <HeaderTranslateGlyph />
      </Chip>
      <Chip $w={301} $start={32} $gap={21}>
        <ProfileGlyph />
        Jasmine Mai
      </Chip>
    </HeaderActions>
  </Header>
);

const SideNav = () => (
  <Sidebar>
    {NAV.map((item, i) =>
      item.active ? (
        <ActivePill key={i}>{item.icon}</ActivePill>
      ) : (
        <NavRow key={i}>
          <NavIcon>{item.icon}</NavIcon>
          {item.more && (
            <NavDots>
              <NavDot />
              <NavDot />
              <NavDot />
            </NavDots>
          )}
        </NavRow>
      ),
    )}
  </Sidebar>
);

const SessionBar = () => (
  <TitleRow>
    <BackButton>
      <svg width="14" height="22" viewBox="0 0 14 22">
        <path d="M14 0v22L0 11z" fill={BLUE} />
      </svg>
    </BackButton>
    <SessionTitle>
      <LiveDot />
      20250106-2
      <EditMark>
        <AiOutlineEdit size={30} />
      </EditMark>
    </SessionTitle>
    <SessionInfo>
      <InfoIcon>
        <AiOutlineUser size={29} />
      </InfoIcon>
      <InfoText>Student School Test</InfoText>
      <InfoIcon>
        <AiOutlineClockCircle size={30} />
      </InfoIcon>
      <InfoText $strong>2079:02:01</InfoText>
      <FolderUpGlyph />
    </SessionInfo>
  </TitleRow>
);

const History = () => (
  <LeftColumn>
    <LiveCard>
      <RoundIcon $bg="#c9e0f7" $fg={BLUE}>
        <MicGlyph />
      </RoundIcon>
      <SectionTitle $c={LINK}>Live Transcription</SectionTitle>
    </LiveCard>
    <HistoryCard>
      <HistoryHead>
        <RoundIcon $bg="#bdf0d0" $fg="#21a83c">
          <EditGlyph />
        </RoundIcon>
        <SectionTitle $c="#21a83c">Session History</SectionTitle>
      </HistoryHead>
      <HistoryList>
        {ENTRIES.map((entry) => (
          <Entry key={entry.words[0]}>
            {entry.words.map((line) => (
              <WordLine key={line}>
                {line.split(' ').map((w, i) => (
                  <Word key={i}>{w}</Word>
                ))}
              </WordLine>
            ))}
            <Translation>
              <Bullet />
              <div>
                {entry.zh.map((line) => (
                  <ZhLine key={line}>{line}</ZhLine>
                ))}
              </div>
            </Translation>
          </Entry>
        ))}
      </HistoryList>
      <ScrollThumb />
      <DownButton>
        <AiOutlineDown size={26} />
      </DownButton>
    </HistoryCard>
  </LeftColumn>
);

const Flashcards = () => (
  <Flash>
    <FlashArt width="626" height="258" viewBox="0 0 626 258">
      <path d="M251 16L300-10l22 43-51 25z" fill="#fff" opacity="0.150" />
      <path d="M401 51l10-17 17 11-10 17z" fill="#5ecb80" />
      <path d="M551.500 133l8-10.500L570 130l-7 11z" fill="#3cc878" />
      <path d="M7 229.500L27.500 210l23 23L31 253z" fill="#fff" opacity="0.150" />
      <circle cx="436" cy="243" r="13.500" fill="none" stroke="#fff" strokeOpacity="0.450" strokeWidth="2" strokeDasharray="7 7" />
      <circle cx="436" cy="257" r="3" fill="#fff" opacity="0.300" />
      <rect x="479" y="29" width="54" height="82" rx="8" fill="#fff" opacity="0.100" transform="rotate(-10 506 70)" />
      <rect x="505" y="33" width="54" height="80" rx="8" fill="#fff" opacity="0.080" transform="rotate(15 532 72)" />
      <rect x="504" y="31" width="54" height="82" rx="8" fill="#fff" opacity="0.180" transform="rotate(9 531 72)" />
      <rect x="476" y="32" width="55" height="82" rx="8" fill="#e2fbee" opacity="0.780" />
      <rect x="483" y="47" width="41" height="12" rx="6" fill="#a8ead0" opacity="0.850" />
      <path d="M491 74h24M491 81.500h24M491 89.500h24" stroke="#9fe3ca" strokeWidth="3.200" strokeLinecap="round" />
    </FlashArt>
    <FlashTitle>Flashcards Review</FlashTitle>
    <FlashText>9 items ready to practice</FlashText>
    <StartButton>
      Start
      <AiOutlineRight size={28} />
    </StartButton>
  </Flash>
);

const NotesPanel = () => (
  <Panel>
    <Tabs>
      <ActiveTab>Notes</ActiveTab>
      <TabIcon $x={104}>
        <Star size={28} />
      </TabIcon>
      <TabIcon $x={98}>
        <TagIcon size={28} />
      </TabIcon>
      <TabIcon $x={95}>
        <Inbox size={28} />
      </TabIcon>
    </Tabs>
    <NotebookRow>
      My Notebook
      <AiOutlineArrowRight size={28} color={BLUE} />
    </NotebookRow>
    <TagsHead>
      CONTENT TAGS
      <AddNew>
        <AiOutlinePlus size={22} />
        Add New
      </AddNew>
    </TagsHead>
    <TagGrid>
      {TAGS.map((t) => (
        <TagOption key={t}>
          <CheckBox />
          {t}
        </TagOption>
      ))}
    </TagGrid>
    <EmptyBox>
      <DashFrame width="584" height="296" viewBox="0 0 584 296">
        <rect x="1.500" y="1.500" width="581" height="293" rx="32" fill="none" stroke="#ebecee" strokeWidth="2.600" strokeDasharray="9 9.100" />
      </DashFrame>
      <EmptyIcon>
        <AiOutlineSearch size={46} />
      </EmptyIcon>
      <EmptyTitle>No Selection</EmptyTitle>
      <EmptyText>{'Tap sentences in the transcript to build notes for\nthis session.'}</EmptyText>
    </EmptyBox>
    <Flashcards />
  </Panel>
);

const NotebookDialog = () => (
  <Overlay>
    <Dialog>
      <DialogHead>
        <div>
          <DialogTitleRow>
            <BookGlyph />
            <DialogTitle>My Notebook</DialogTitle>
            <CountPill>9 items</CountPill>
          </DialogTitleRow>
          <DialogSub>Saved Transcriptions &amp; Notes</DialogSub>
        </div>
        <SquareButton $c="#1a1a1a">
          <AiOutlineClose size={28} />
        </SquareButton>
      </DialogHead>
      <SearchRow>
        <SearchField>
          <AiOutlineSearch size={25} />
          Global search: Find sentences across all folders...
        </SearchField>
        <SquareButton $c="#1677ff">
          <AiOutlineReload size={30} />
        </SquareButton>
      </SearchRow>
      <FolderGrid>
        {FOLDERS.map((f) => (
          <Folder key={f.name}>
            <Watermark $c={f.mark ?? f.color}>
              <LineIcon name={f.icon} size={160} weight={2} />
            </Watermark>
            <Tile $bg={f.tile} $fg={f.color}>
              <LineIcon name={f.icon} size={38} weight={1.75} />
            </Tile>
            {f.fresh && (
              <NewBadge>
                <BadgeDot />
                NEW NOTE
              </NewBadge>
            )}
            <FolderName>{f.name}</FolderName>
            <FolderFoot>
              <FolderCount>{f.count} notes</FolderCount>
              <GoCircle $c={f.color}>
                <AiOutlineArrowRight size={28} />
              </GoCircle>
            </FolderFoot>
          </Folder>
        ))}
      </FolderGrid>
      <ClearButton>Clear All Notes</ClearButton>
    </Dialog>
  </Overlay>
);

export default function App() {
  return (
    <>
      <GlobalStyle />
      <Shell>
        <TopBar />
        <Body>
          <SideNav />
          <Content>
            <SessionBar />
            <Columns>
              <History />
              <ColumnRule />
              <NotesPanel />
            </Columns>
          </Content>
        </Body>
        <NotebookDialog />
      </Shell>
    </>
  );
}
